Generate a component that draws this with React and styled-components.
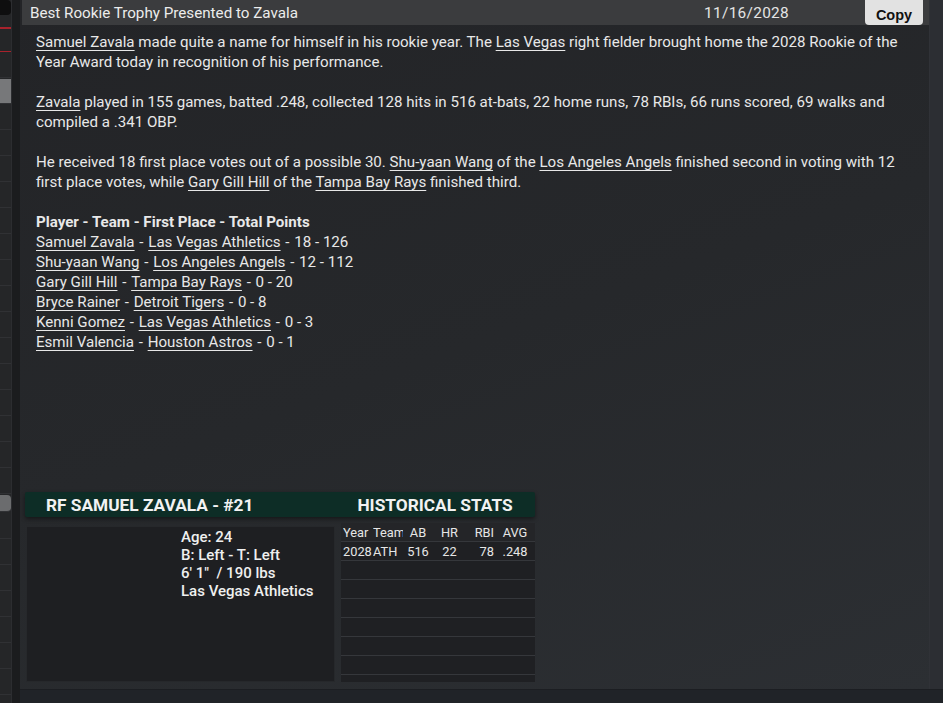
import React from 'react';
import styled, { createGlobalStyle } from 'styled-components';

const GlobalStyle = createGlobalStyle`
  html, body {
    margin: 0;
    padding: 0;
    background: #1f2125;
    font-family: Roboto, "Liberation Sans", sans-serif;
  }
`;

const sideRows = [
  { kind: 'dark' },
  { kind: 'red' },
  { kind: 'plain' },
  { kind: 'grey' },
  ...Array.from({ length: 15 }, () => ({ kind: 'plain' })),
  { kind: 'button' },
  ...Array.from({ length: 8 }, () => ({ kind: 'plain' })),
];

const voters = [
  ['Samuel Zavala', 'Las Vegas Athletics', '18 - 126'],
  ['Shu-yaan Wang', 'Los Angeles Angels', '12 - 112'],
  ['Gary Gill Hill', 'Tampa Bay Rays', '0 - 20'],
  ['Bryce Rainer', 'Detroit Tigers', '0 - 8'],
  ['Kenni Gomez', 'Las Vegas Athletics', '0 - 3'],
  ['Esmil Valencia', 'Houston Astros', '0 - 1'],
];

const statCols = ['Year', 'Team', 'AB', 'HR', 'RBI', 'AVG'];
const statRows = [['2028', 'ATH', '516', '22', '78', '.248']];

function App() {
  return (
    <Shell>
      <GlobalStyle />
      <Sidebar>
        {sideRows.map((row, i) => (
          <SideRow key={i} kind={row.kind} />
        ))}
      </Sidebar>
      <Gutter />
      <Main>
        <Row>
          <Panel>
            <Header>
              <Title>Best Rookie Trophy Presented to Zavala</Title>
              <DateText>11/16/2028</DateText>
              <CopyButton>Copy</CopyButton>
            </Header>

            <Body>
              <p>
                <Link>Samuel Zavala</Link> made quite a name for himself in his rookie year. The{' '}
                <Link>Las Vegas</Link> right fielder brought home the 2028 Rookie of the Year Award
                today in recognition of his performance.
              </p>
              <p>
                <Link>Zavala</Link> played in 155 games, batted .248, collected 128 hits in 516
                at-bats, 22 home runs, 78 RBIs, 66 runs scored, 69 walks and compiled a .341 OBP.
              </p>
              <p>
                He received 18 first place votes out of a possible 30. <Link>Shu-yaan Wang</Link> of
                the <Link>Los Angeles Angels</Link> finished second in voting with 12 first place
                votes, while <Link>Gary Gill Hill</Link> of the <Link>Tampa Bay Rays</Link> finished
                third.
              </p>
              <p>
                <strong>Player - Team - First Place - Total Points</strong>
                {voters.map(([name, team, pts]) => (
                  <React.Fragment key={name}>
                    <br />
                    <Link>{name}</Link>
                    <Sep> - </Sep>
                    <Link>{team}</Link>
                    <Sep> - </Sep>
                    {pts}
                  </React.Fragment>
                ))}
              </p>
            </Body>

            <Card>
              <CardHead>
                <CardTitle>RF SAMUEL ZAVALA - #21</CardTitle>
                <CardTitle center>HISTORICAL STATS</CardTitle>
              </CardHead>
              <CardBody>
                <InfoBox>
                  <div>Age: 24</div>
                  <div>B: Left - T: Left</div>
                  <div>6' 1"&nbsp; / 190 lbs</div>
                  <div>Las Vegas Athletics</div>
                </InfoBox>
                <StatTable>
                  <StatRow head>
                    {statCols.map((c, i) => (
                      <Cell key={c} col={i}>{c}</Cell>
                    ))}
                  </StatRow>
                  {statRows.map((r) => (
                    <StatRow key={r[0]}>
                      {r.map((v, i) => (
                        <Cell key={i} col={i}>{v}</Cell>
                      ))}
                    </StatRow>
                  ))}
                  {Array.from({ length: 7 }, (_, i) => (
                    <StatRow key={'e' + i} />
                  ))}
                </StatTable>
              </CardBody>
            </Card>
          </Panel>
          <RightStrip />
        </Row>
        <BottomStrip />
      </Main>
    </Shell>
  );
}

const Shell = styled.div`
  display: flex;
  width: 943px;
  height: 703px;
  overflow: hidden;
  color: #e8e8e8;
`;

const Sidebar = styled.div`
  width: 11px;
  flex: none;
  display: flex;
  flex-direction: column;
  background: #252628;
  overflow: hidden;
`;

const SideRow = styled.div`
  flex: none;
  height: ${(p) => (p.kind === 'dark' ? 14 : p.kind === 'button' ? 16 : 24)}px;
  margin-bottom: ${(p) => (p.kind === 'dark' ? 12 : p.kind === 'button' ? 2 : 1)}px;
  border-bottom: 1px solid
    ${(p) => (p.kind === 'red' ? '#a8222c' : p.kind === 'dark' ? 'transparent' : '#303134')};
  background: ${(p) =>
    p.kind === 'grey' ? '#77787a' : p.kind === 'button' ? '#6b6c6e' : p.kind === 'dark' ? '#0e0e0f' : 'transparent'};
  border-radius: ${(p) => (p.kind === 'dark' || p.kind === 'button' ? '0 4px 4px 0' : '0')};
  ${(p) => p.kind === 'red' && 'border-top: 2px solid #a8222c; height: 22px;'}
`;

const Gutter = styled.div`
  width: 9px;
  flex: none;
  background: #1b1c1e;
  border-left: 1px solid #2c2d30;
  box-sizing: border-box;
`;

const Main = styled.div`
  flex: 1;
  display: flex;
  flex-direction: column;
  min-width: 0;
`;

const Row = styled.div`
  flex: 1;
  display: flex;
  min-height: 0;
`;

const Panel = styled.div`
  flex: 1;
  display: flex;
  flex-direction: column;
  background: linear-gradient(160deg, #232427 0%, #26282b 50%, #2c2f33 100%);
  min-width: 0;
`;

const RightStrip = styled.div`
  width: 13px;
  flex: none;
  background: #2c2e33;
  border-left: 1px solid #303237;
`;

const BottomStrip = styled.div`
  height: 13px;
  flex: none;
  background: #202328;
  border-top: 1px solid #1c1e22;
`;

const Header = styled.div`
  height: 25px;
  margin-left: 2px;
  display: flex;
  align-items: center;
  background: #3b3c3e;
  padding-left: 8px;
`;

const Title = styled.div`
  flex: 1;
  font-size: 15.2px;
  color: #ececec;
`;

const DateText = styled.div`
  font-size: 15.4px;
  color: #e4e4e4;
  letter-spacing: 0.3px;
  margin-right: 76px;
`;

const CopyButton = styled.button`
  align-self: stretch;
  width: 58px;
  margin-right: 6px;
  border: none;
  border-radius: 0 0 4px 4px;
  background: #e2e2e2;
  color: #111;
  font-family: "Liberation Sans", Arial, sans-serif;
  font-weight: bold;
  font-size: 14.5px;
  padding: 4px 0 0;
`;

const Body = styled.div`
  flex: 1;
  padding: 7px 14px 0 16px;
  font-size: 15.1px;
  line-height: 20px;
  color: #e8e8e8;

  p {
    margin: 0 0 20px;
  }

  strong {
    font-weight: 700;
  }
`;

const Link = styled.span`
  text-decoration: underline;
  text-underline-offset: 3px;
  text-decoration-thickness: 1px;
`;

const Sep = styled.span`
  padding: 0 1px;
`;

const Card = styled.div`
  width: 510px;
  margin: 0 0 7px 5px;
  display: flex;
  flex-direction: column;
`;

const CardHead = styled.div`
  height: 25px;
  display: grid;
  grid-template-columns: 310px 200px;
  align-items: center;
  background: #0d2d26;
  box-shadow: 0 2px 4px rgba(0, 0, 0, 0.45);
  border-radius: 2px;
`;

const CardTitle = styled.div`
  font-size: 17.3px;
  font-weight: 700;
  color: #f2f2f2;
  padding-left: ${(p) => (p.center ? 0 : 21)}px;
  text-align: ${(p) => (p.center ? 'center' : 'left')};
`;

const CardBody = styled.div`
  display: flex;
  gap: 6px;
  margin-top: 6px;
  height: 159px;
`;

const InfoBox = styled.div`
  width: 309px;
  margin: 3px 0 0 1px;
  box-sizing: border-box;
  padding: 1px 0 0 154px;
  background: #1e1f22;
  border: 1px solid #26282b;
  font-size: 15px;
  font-weight: 500;
  line-height: 18px;
  color: #efefef;
`;

const StatTable = styled.div`
  width: 194px;
  background: #222326;
  overflow: hidden;
`;

const StatRow = styled.div`
  height: 19px;
  display: grid;
  grid-template-columns: 30px 30px 30px 33px 30px 38px;
  align-items: center;
  box-sizing: border-box;
  border-bottom: 1px solid #35373b;
  font-size: 12.8px;
  color: #e6e6e6;
  background: ${(p) => (p.head ? '#242528' : '#1f2023')};
  padding-left: 2px;
`;

const Cell = styled.div`
  white-space: nowrap;
  overflow: hidden;
  text-align: ${(p) => (p.col < 2 ? 'left' : p.col === 4 ? 'right' : 'center')};
  padding-right: ${(p) => (p.col === 4 ? 2 : 0)}px;
`;

export default App;
